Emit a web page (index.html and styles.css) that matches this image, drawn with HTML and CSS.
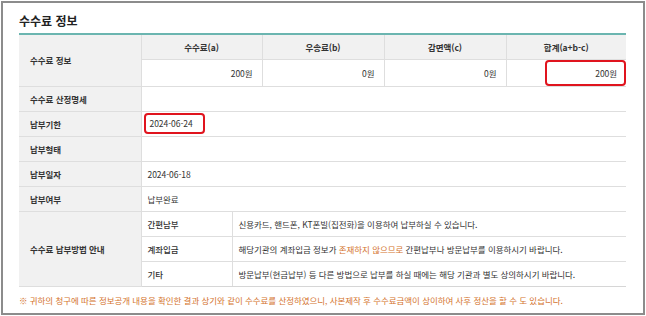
FILE: index.html
```html
<!DOCTYPE html>
<html lang="ko">
<head>
<meta charset="utf-8">
<link rel="stylesheet" href="styles.css">
</head>
<body>
<div class="frame">
  <h2 class="title">수수료 정보</h2>
  <table class="fee">
    <colgroup>
      <col class="c-label"><col class="c-sub"><col class="c-rest"><col class="c-b"><col class="c-c"><col class="c-t">
    </colgroup>
    <tr>
      <th class="label" rowspan="2">수수료 정보</th>
      <th class="head" colspan="2">수수료(a)</th>
      <th class="head">우송료(b)</th>
      <th class="head">감면액(c)</th>
      <th class="head">합계(a+b-c)</th>
    </tr>
    <tr>
      <td class="num" colspan="2">200원</td>
      <td class="num">0원</td>
      <td class="num">0원</td>
      <td class="num"><span class="mark mark-total">200원</span></td>
    </tr>
    <tr><th class="label">수수료 산정명세</th><td colspan="5"></td></tr>
    <tr><th class="label">납부기한</th><td colspan="5"><span class="mark mark-date">2024-06-24</span></td></tr>
    <tr><th class="label">납부형태</th><td colspan="5"></td></tr>
    <tr><th class="label">납부일자</th><td colspan="5">2024-06-18</td></tr>
    <tr><th class="label">납부여부</th><td colspan="5">납부완료</td></tr>
    <tr>
      <th class="label" rowspan="3">수수료 납부방법 안내</th>
      <td class="sub">간편납부</td>
      <td colspan="4">신용카드, 핸드폰, KT폰빌(집전화)을 이용하여 납부하실 수 있습니다.</td>
    </tr>
    <tr>
      <td class="sub">계좌입금</td>
      <td colspan="4">해당기관의 계좌입금 정보가 <span class="warn">존재하지 않으므로</span> 간편납부나 방문납부를 이용하시기 바랍니다.</td>
    </tr>
    <tr>
      <td class="sub">기타</td>
      <td colspan="4">방문납부(현금납부) 등 다른 방법으로 납부를 하실 때에는 해당 기관과 별도 상의하시기 바랍니다.</td>
    </tr>
  </table>
  <p class="note">※ 귀하의 청구에 따른 정보공개 내용을 확인한 결과 상기와 같이 수수료를 산정하였으니, 사본제작 후 수수료금액이 상이하여 사후 정산을 할 수 도 있습니다.</p>
</div>
</body>
</html>
```

FILE: styles.css
```css
* { box-sizing: border-box; }
html, body { margin: 0; padding: 0; background: #fff; }
body {
  font-family: "Noto Sans CJK KR", "Noto Sans", sans-serif;
  color: #333;
}
.frame {
  margin: 1px;
  width: 644px;
  height: 314px;
  border: 2px solid #8c8c8c;
  padding: 0 0 0 16px;
}
.title {
  margin: 0;
  padding-top: 9px;
  height: 30px;
  font-size: 12px;
  font-weight: 700;
  color: #222;
  line-height: 18px;
}
.fee {
  width: 607px;
  table-layout: fixed;
  border-collapse: collapse;
  border-top: 2px solid #6bb5b0;
  font-size: 8.5px;
  letter-spacing: -0.05px;
}
.c-label { width: 122px; }
.c-sub { width: 91px; }
.c-rest { width: 30px; }
.c-b { width: 122px; }
.c-c { width: 122px; }
.c-t { width: 120px; }
.fee th, .fee td {
  border: 1px solid #dedede;
  height: 25px;
  padding: 0 6px;
  vertical-align: middle;
  font-weight: 400;
  text-align: left;
  white-space: nowrap;
}
.fee tr > :first-child { border-left: 0; }
.fee tr > :last-child { border-right: 0; }
.fee th.label {
  background: #f1f1f1;
  font-weight: 700;
  color: #333;
  padding-left: 11px;
}
.fee th.head {
  background: #f1f1f1;
  text-align: center;
  font-weight: 700;
}
.fee td.num { text-align: right; padding-right: 9px; }
.fee td.sub { font-weight: 500; padding-left: 6px; }
.fee tr:last-child > * { border-bottom: 1px solid #d6d6d6; }
.mark {
  display: inline-block;
  border: 2px solid #e0141e;
  border-radius: 4px;
}
.mark-total {
  display: block;
  margin: 0 -9px 0 32px;
  height: 26px;
  line-height: 22px;
  padding-right: 7px;
}
.mark-date {
  margin-left: -4px;
  height: 21px;
  line-height: 17px;
  padding: 0 4px;
  width: 61px;
}
.warn { color: #d4732d; }
.note {
  margin: 7px 0 0 0;
  font-size: 8.5px;
  letter-spacing: -0.05px;
  color: #d4732d;
}
```
